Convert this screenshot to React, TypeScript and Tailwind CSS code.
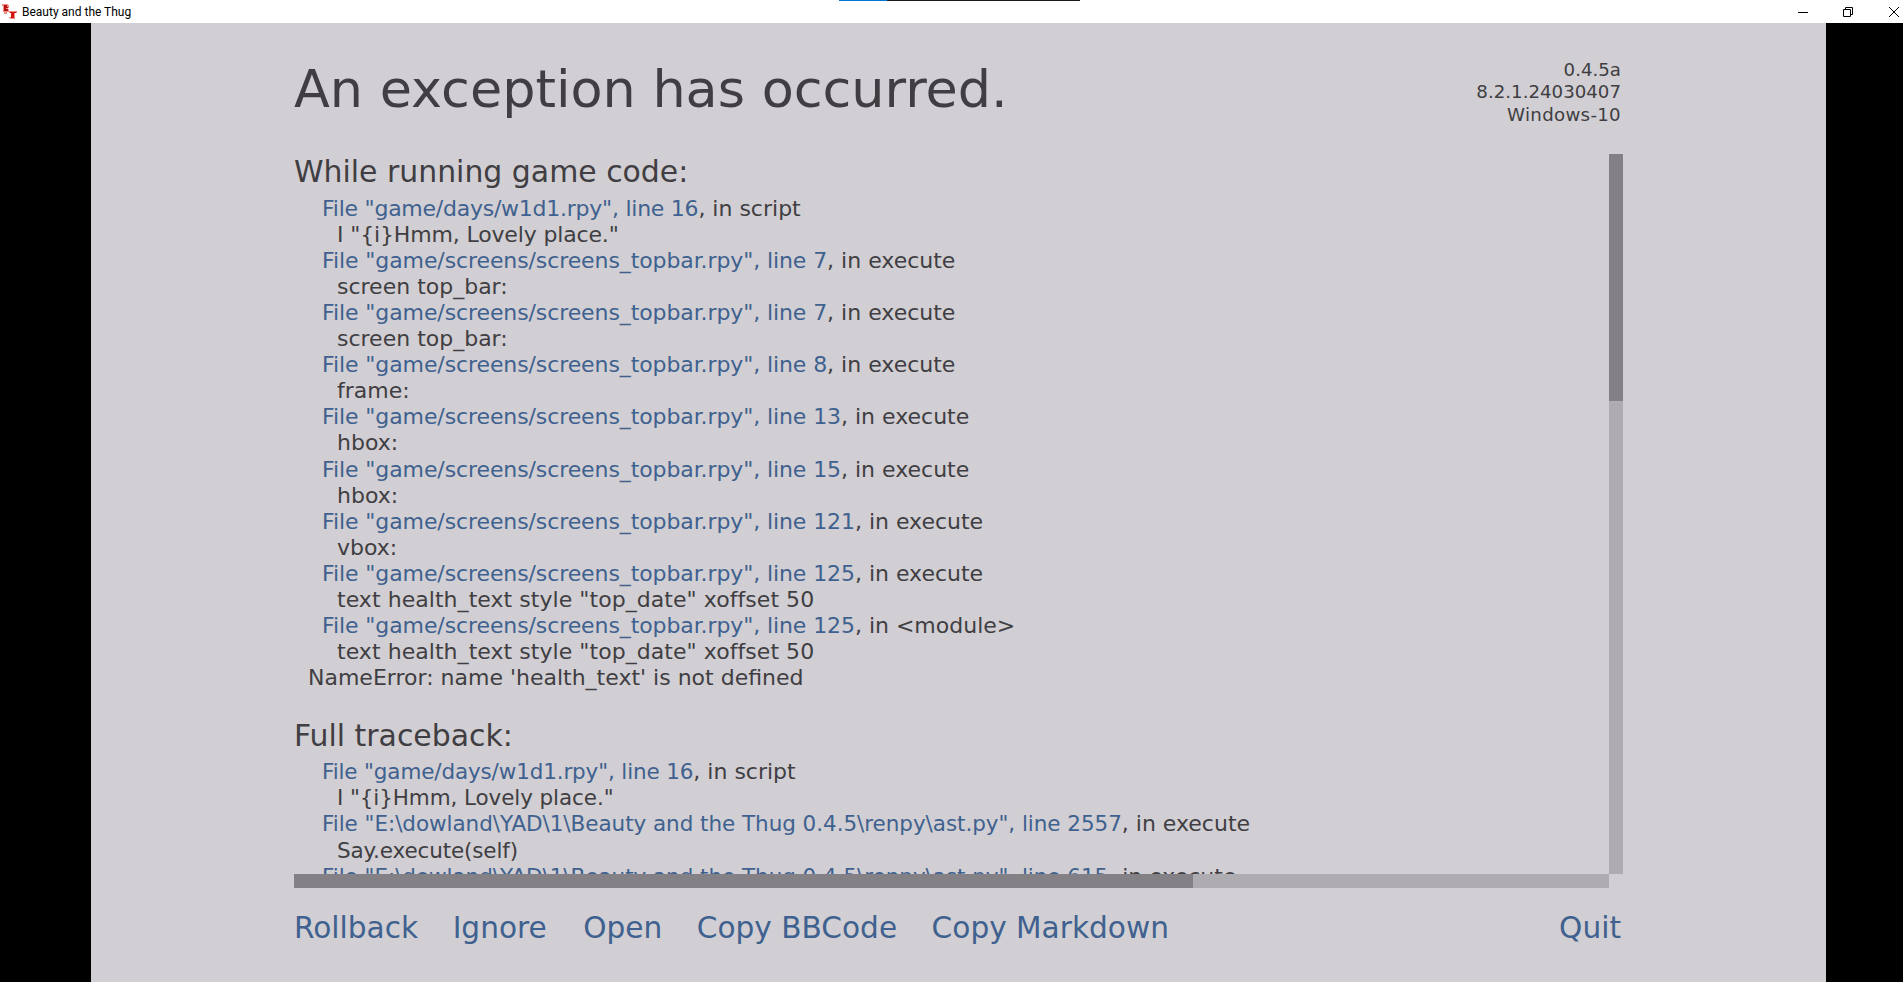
// App.tsx
const FONT = "font-['DejaVu_Sans',sans-serif]";

type TraceLine = { file?: string; tail?: string; code?: string; cls?: string };

// ren'py hints its glyphs, so the line widths drift a little from one line to the next
const TOPBAR = "text-[22px] tracking-[-0.1px]";

const gameLines: TraceLine[] = [
    { file: 'File "game/days/w1d1.rpy", line 16', tail: ", in script", cls: "text-[22px] tracking-[-0.25px]" },
    { code: 'I "{i}Hmm, Lovely place."', cls: "text-[22px] tracking-[-0.15px]" },
    { file: 'File "game/screens/screens_topbar.rpy", line 7', tail: ", in execute", cls: TOPBAR },
    { code: "screen top_bar:", cls: "text-[22px]" },
    { file: 'File "game/screens/screens_topbar.rpy", line 7', tail: ", in execute", cls: TOPBAR },
    { code: "screen top_bar:", cls: "text-[22px]" },
    { file: 'File "game/screens/screens_topbar.rpy", line 8', tail: ", in execute", cls: TOPBAR },
    { code: "frame:", cls: "text-[22px]" },
    { file: 'File "game/screens/screens_topbar.rpy", line 13', tail: ", in execute", cls: TOPBAR },
    { code: "hbox:", cls: "text-[22px]" },
    { file: 'File "game/screens/screens_topbar.rpy", line 15', tail: ", in execute", cls: TOPBAR },
    { code: "hbox:", cls: "text-[22px]" },
    { file: 'File "game/screens/screens_topbar.rpy", line 121', tail: ", in execute", cls: TOPBAR },
    { code: "vbox:", cls: "text-[22px]" },
    { file: 'File "game/screens/screens_topbar.rpy", line 125', tail: ", in execute", cls: TOPBAR },
    { code: 'text health_text style "top_date" xoffset 50', cls: "text-[22px] tracking-[0.05px]" },
    { file: 'File "game/screens/screens_topbar.rpy", line 125', tail: ", in <module>", cls: TOPBAR },
    { code: 'text health_text style "top_date" xoffset 50', cls: "text-[22px] tracking-[0.05px]" },
];

const fullLines: TraceLine[] = [
    { file: 'File "game/days/w1d1.rpy", line 16', tail: ", in script", cls: "text-[21.5px] tracking-[-0.14px]" },
    { code: 'I "{i}Hmm, Lovely place."', cls: "text-[21.5px] tracking-[-0.1px]" },
    {
        file: 'File "E:\\dowland\\YAD\\1\\Beauty and the Thug 0.4.5\\renpy\\ast.py", line 2557',
        tail: ", in execute",
        cls: "text-[21.5px] tracking-[-0.05px]",
    },
    { code: "Say.execute(self)", cls: "text-[21.5px] tracking-[-0.14px]" },
    {
        file: 'File "E:\\dowland\\YAD\\1\\Beauty and the Thug 0.4.5\\renpy\\ast.py", line 615',
        tail: ", in execute",
        cls: "text-[21.5px] tracking-[-0.05px]",
    },
];

function Trace({ lines }: { lines: TraceLine[] }) {
    return (
        <>
            {lines.map((l, i) => (
                <div
                    key={i}
                    className={`h-[26.1px] text-[22px] leading-[26px] whitespace-pre ${l.file ? "pl-[28px]" : "pl-[43px]"}`}
                >
                    {l.file ? (
                        <>
                            <span className={`text-[#3f618f] ${l.cls}`}>{l.file}</span>
                            {l.tail}
                        </>
                    ) : (
                        <span className={l.cls}>{l.code}</span>
                    )}
                </div>
            ))}
        </>
    );
}

function TitleBar() {
    return (
        <div className="relative flex h-[23px] shrink-0 items-center bg-white">
            {/* window icon: blocky red B and T */}
            <svg viewBox="0 0 15 17" className="ml-[2px] h-[17px] w-[15px]">
                <path d="M0 1h6v1h1v3H6v1h1v3H5v2H2V9H1V3H0z" fill="#ef8f88" />
                <path d="M2 2h3v2h1v1H4v1h2v2H2z" fill="#b81512" />
                <path d="M7 8h8v2h-2v6H8v-1H7v-1h2v-4H7z" fill="#f08a82" />
                <path d="M8 9h6v1h-2v5H9v-5H8z" fill="#d3130f" />
            </svg>
            <span className="ml-[5px] font-['Roboto',sans-serif] text-[12px] leading-none text-black">
                Beauty and the Thug
            </span>
            <div className="absolute left-[839px] top-0 flex h-px w-[241px]">
                <div className="w-[48px] bg-[#0078d7]" />
                <div className="flex-1 bg-[#1a1a1a]" />
            </div>
            <div className="ml-auto flex items-center text-black">
                <svg viewBox="0 0 10 10" className="mr-[35px] h-[10px] w-[10px]">
                    <path d="M0 5.5h10" stroke="currentColor" fill="none" />
                </svg>
                <svg viewBox="0 0 10 10" className="mr-[36px] h-[10px] w-[10px]">
                    <path d="M.5 2.5h7v7h-7zM2.5 2.5v-2h7v7h-2" stroke="currentColor" fill="none" />
                </svg>
                <svg viewBox="0 0 10 10" className="mr-[4px] h-[10px] w-[10px]">
                    <path d="M0 0l10 10M10 0L0 10" stroke="currentColor" fill="none" />
                </svg>
            </div>
        </div>
    );
}

export default function App() {
    return (
        <div className={`flex h-[982px] w-[1903px] flex-col overflow-hidden bg-black ${FONT}`}>
            <TitleBar />
            <div className="ml-[91px] flex w-[1735px] flex-1 flex-col bg-[#d1cfd3] pl-[203px] pr-[203px] text-[#403e42]">
                {/* header */}
                <div className="flex h-[131px] shrink-0 justify-between">
                    <div className="pt-[33px] text-[52.4px] leading-[66px]">An exception has occurred.</div>
                    <div className="pt-[36px] pr-[2px] text-right text-[18.2px] leading-[22.3px]">
                        <div>0.4.5a</div>
                        <div>8.2.1.24030407</div>
                        <div className="tracking-[0.3px]">Windows-10</div>
                    </div>
                </div>

                {/* traceback with scrollbars */}
                <div className="grid h-[734px] shrink-0 grid-cols-[1fr_14px] grid-rows-[720px_14px]">
                    <div className="overflow-hidden">
                        <div className="h-[41.6px] text-[29.9px] leading-[35px]">While running game code:</div>
                        <Trace lines={gameLines} />
                        <div className="h-[26px] pl-[14px] text-[22px] leading-[26px] whitespace-pre">
                            NameError: name 'health_text' is not defined
                        </div>
                        <div className="mt-[27px] h-[41px] text-[29.9px] leading-[35px]">Full traceback:</div>
                        <Trace lines={fullLines} />
                    </div>
                    <div className="bg-[#aeacb0]">
                        <div className="h-[247px] bg-[#838185]" />
                    </div>
                    <div className="bg-[#aeacb0]">
                        <div className="h-full w-[899px] bg-[#838185]" />
                    </div>
                    <div />
                </div>

                {/* actions */}
                <div className="flex items-start gap-[34.5px] pt-[22px] text-[29.6px] leading-[36px] text-[#3f618f]">
                    <span>Rollback</span>
                    <span>Ignore</span>
                    <span className="ml-[2px]">Open</span>
                    <span>Copy BBCode</span>
                    <span>Copy Markdown</span>
                    <span className="ml-auto pr-[2px]">Quit</span>
                </div>
            </div>
        </div>
    );
}
